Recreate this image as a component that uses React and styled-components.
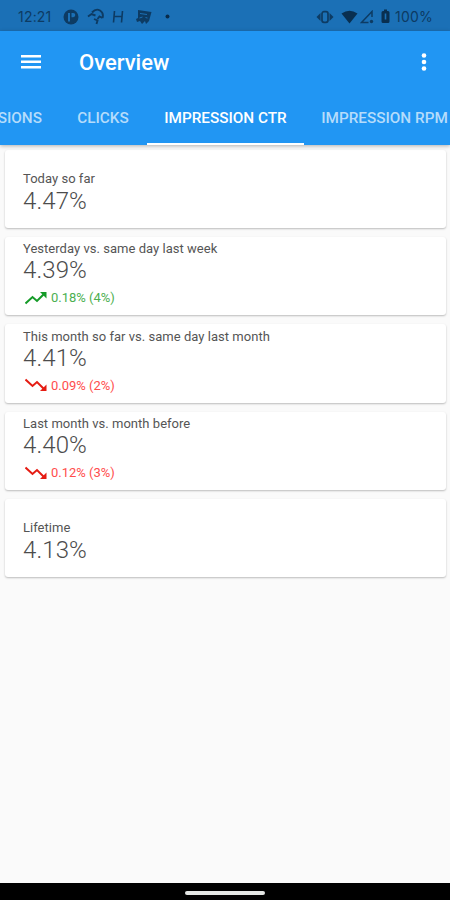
import React from "react";
import styled, { createGlobalStyle } from "styled-components";

const GlobalStyle = createGlobalStyle`
  * {
    box-sizing: border-box;
  }
  body {
    margin: 0;
    background-color: #fafafa;
    font-family: Roboto, "Liberation Sans", sans-serif;
  }
`;

const Screen = styled.div`
  display: flex;
  flex-direction: column;
  width: 450px;
  height: 900px;
  overflow: hidden;
  background-color: #fafafa;
`;

const StatusBar = styled.div`
  display: flex;
  align-items: center;
  justify-content: space-between;
  flex: none;
  height: 31px;
  padding: 2px 17px 0 18px;
  background-color: #1b70b6;
  color: #0d3b63;
`;

const StatusGroup = styled.div`
  display: flex;
  align-items: center;
`;

const StatusText = styled.span`
  margin-left: ${(props) => props.$gap || 0}px;
  font-family: Inter, Roboto, sans-serif;
  font-size: 14px;
  line-height: 16px;
  letter-spacing: 0.2px;
`;

const Icon = styled.svg`
  display: block;
  flex: none;
  margin-left: ${(props) => props.$gap || 0}px;
`;

const Header = styled.header`
  position: relative;
  z-index: 1;
  flex: none;
  height: 114px;
  background-color: #2196f3;
  box-shadow: 0 1px 4px rgba(0, 0, 0, 0.3);
`;

const Toolbar = styled.div`
  display: flex;
  align-items: center;
  height: 62px;
  padding: 0 23px 0 21px;
  color: #fff;
`;

const Title = styled.h1`
  flex: 1;
  margin: 1px 0 0 38px;
  font-size: 22px;
  font-weight: 500;
  line-height: 26px;
`;

const Tabs = styled.nav`
  display: flex;
  height: 52px;
  overflow: hidden;
`;

const Tab = styled.div`
  display: flex;
  align-items: center;
  justify-content: ${(props) => props.$align || "center"};
  flex: none;
  width: ${(props) => props.$width}px;
  padding: 0 17px 0 ${(props) => (props.$align ? 0 : 17)}px;
  border-bottom: 2px solid ${(props) => (props.$active ? "#fff" : "transparent")};
  color: ${(props) => (props.$active ? "#fff" : "#b5dcfb")};
  font-size: 15.3px;
  font-weight: 500;
  white-space: nowrap;
`;

const Cards = styled.main`
  display: flex;
  flex: 1;
  flex-direction: column;
  gap: 9px;
  padding: 5px 4px 0 5px;
`;

const Card = styled.section`
  height: ${(props) => (props.$tall ? 78.5 : 77.5)}px;
  padding: ${(props) => (props.$tall ? 4.5 : 20.5)}px 18px 0;
  border-radius: 3px;
  background-color: #fff;
  box-shadow: 0 1px 2px rgba(0, 0, 0, 0.25);
`;

const Label = styled.div`
  color: #555;
  font-size: 13px;
  line-height: 16px;
  letter-spacing: 0.03px;
`;

const Value = styled.div`
  margin-top: ${(props) => (props.$tall ? -1 : 0)}px;
  color: #4c4c4c;
  font-size: 24px;
  font-weight: 300;
  line-height: 28px;
  letter-spacing: 0.1px;
`;

const Change = styled.div`
  display: flex;
  align-items: center;
  height: 24px;
  margin-top: 1.5px;
  color: ${(props) => (props.$up ? "#4caf50" : "#ff4d4d")};
  font-size: 13px;
`;

const TrendIcon = styled.svg`
  margin: 0 4px 0 2px;
  color: ${(props) => (props.$up ? "#159b28" : "#e51c13")};
`;

const NavBar = styled.footer`
  display: flex;
  align-items: center;
  justify-content: center;
  flex: none;
  height: 17px;
  padding-top: 2px;
  background-color: #000;
`;

const HomeHandle = styled.div`
  width: 80px;
  height: 4px;
  border-radius: 2px;
  background-color: #e4e6e4;
`;

const stats = [
  { label: "Today so far", value: "4.47%" },
  { label: "Yesterday vs. same day last week", value: "4.39%", change: "0.18% (4%)", up: true },
  { label: "This month so far vs. same day last month", value: "4.41%", change: "0.09% (2%)" },
  { label: "Last month vs. month before", value: "4.40%", change: "0.12% (3%)" },
  { label: "Lifetime", value: "4.13%" },
];

const Trend = ({ up }) => (
  <TrendIcon $up={up} width="22" height="14" viewBox="0 0 22 14">
    <g transform={up ? undefined : "translate(0 14) scale(1 -1)"}>
      <path d="M.5 12.5 7.500 6l4.500 4L18.500 3.500" fill="none" stroke="currentColor" strokeWidth="2" />
      <path d="M15 1h6.500v6.500z" fill="currentColor" />
    </g>
  </TrendIcon>
);

const StatCard = ({ label, value, change, up }) => (
  <Card $tall={Boolean(change)}>
    <Label>{label}</Label>
    <Value $tall={Boolean(change)}>{value}</Value>
    {change && (
      <Change $up={up}>
        <Trend up={up} />
        {change}
      </Change>
    )}
  </Card>
);

const NotificationIcons = () => (
  <>
    <Icon $gap={11} width="16" height="16" viewBox="0 0 16 16">
      <circle cx="8" cy="8" r="7.5" fill="currentColor" />
      <path d="M5 4h2v8.500H5zM8.500 4h1.700a2 2 0 0 1 0 4.200H8.500z" fill="#1b70b6" />
    </Icon>
    <Icon $gap={8} width="17" height="17" viewBox="0 0 17 17">
      <path
        d="M1 8.500 4.500 6l4 1.500M5 4.500Q9 0 13 2.500t2.500 7.500M15.500 10l-3-1.500-2 2.500M7 11l3.500 1.500L9.500 16"
        fill="none"
        stroke="currentColor"
        strokeWidth="1.9"
      />
    </Icon>
    <Icon $gap={8} width="12" height="13" viewBox="0 0 12 13">
      <path d="M2.500 1 1.500 12.500M10.500 1 9.500 12.500M2 6.500h8" fill="none" stroke="currentColor" strokeWidth="1.6" />
    </Icon>
    <Icon $gap={11} width="17" height="16" viewBox="0 0 17 16">
      <path d="M3 1 16.500 3 14 12l-3 3-1-3-3 3-2-3-3 1-1-3 2-1z" fill="currentColor" />
      <path d="M5 4.500 12 5.500M4.500 9l3-1M10.500 8.500l2 .500" stroke="#1b70b6" strokeWidth="1" />
    </Icon>
    <Icon $gap={13} width="5" height="5" viewBox="0 0 5 5">
      <circle cx="2.5" cy="2.5" r="2" fill="#092c4b" />
    </Icon>
  </>
);

const SystemIcons = () => (
  <>
    <Icon width="18" height="14" viewBox="0 0 18 14">
      <path d="M4.500 3 .500 7l4 4zM13.500 3 17.500 7l-4 4z" fill="currentColor" />
      <rect x="6" y="1.700" width="6" height="10.600" rx="2" fill="none" stroke="currentColor" strokeWidth="1.7" />
    </Icon>
    <Icon $gap={7} width="17" height="14" viewBox="0 0 17 14">
      <path d="M.5 3.500q8-5.500 16 0L8.500 13.500z" fill="#092f50" />
    </Icon>
    <Icon $gap={2} width="14" height="14" viewBox="0 0 14 14">
      <path d="M12 7V1.500L1.500 12.500h7" fill="none" stroke="currentColor" strokeWidth="1.5" />
      <circle cx="11.500" cy="11.500" r="1.700" fill="currentColor" />
    </Icon>
    <Icon $gap={7} width="9" height="15" viewBox="0 0 9 15">
      <path
        d="M3 .5h3V2h1q1.500 0 1.500 1.500v9Q8.500 14 7 14H2Q.5 14 .5 12.500v-9Q.5 2 2 2h1z"
        fill="#092f50"
      />
      <path d="M4.500 4.500v6" stroke="#1b70b6" strokeWidth="1.600" />
    </Icon>
  </>
);

const App = () => {
  return (
    <>
      <GlobalStyle />
      <Screen>
        <StatusBar>
          <StatusGroup>
            <StatusText>12:21</StatusText>
            <NotificationIcons />
          </StatusGroup>
          <StatusGroup>
            <SystemIcons />
            <StatusText $gap={5}>100%</StatusText>
          </StatusGroup>
        </StatusBar>
        <Header>
          <Toolbar>
            <Icon width="20" height="16" viewBox="0 0 20 16" fill="currentColor">
              <path d="M0 1h20v2.500H0zM0 6.500h20v2.500H0zM0 12h20v2.500H0z" />
            </Icon>
            <Title>Overview</Title>
            <Icon width="6" height="20" viewBox="0 0 6 20" fill="currentColor">
              <circle cx="3" cy="3.500" r="2.300" />
              <circle cx="3" cy="10" r="2.300" />
              <circle cx="3" cy="16.500" r="2.300" />
            </Icon>
          </Toolbar>
          <Tabs>
            <Tab $width={59} $align="flex-end">IMPRESSIONS</Tab>
            <Tab $width={88}>CLICKS</Tab>
            <Tab $width={157} $active>IMPRESSION CTR</Tab>
            <Tab $width={161}>IMPRESSION RPM</Tab>
          </Tabs>
        </Header>
        <Cards>
          {stats.map((stat) => (
            <StatCard key={stat.label} {...stat} />
          ))}
        </Cards>
        <NavBar>
          <HomeHandle />
        </NavBar>
      </Screen>
    </>
  );
};

export default App;
